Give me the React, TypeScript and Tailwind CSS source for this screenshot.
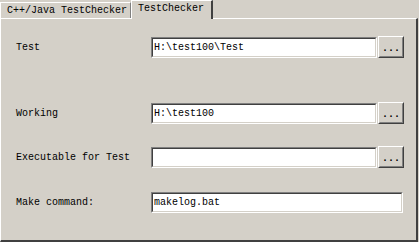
const font = { fontFamily: '"Liberation Mono", "DejaVu Sans Mono", monospace' };

function TextBox({ value, wide }: { value: string; wide?: boolean }) {
  return (
    <div
      className={`${wide ? 'w-[252px]' : 'w-[226px]'} h-[21px] border border-t-[#808080] border-l-[#808080] border-b-white border-r-white`}
    >
      <div className="h-full border border-t-[#404040] border-l-[#404040] border-b-[#d4d0c8] border-r-[#d4d0c8] bg-white flex items-center pl-[1px] text-[10px] text-black leading-none">
        {value}
      </div>
    </div>
  );
}

function Browse() {
  return (
    <div className="w-[26px] h-[22px] border border-t-white border-l-white border-b-[#404040] border-r-[#404040] -mt-[1px]">
      <div className="h-full border border-t-[#d4d0c8] border-l-[#d4d0c8] border-b-[#808080] border-r-[#808080] flex items-center justify-center text-[10px] font-bold text-black leading-none pt-[3px]">
        ...
      </div>
    </div>
  );
}

function Row({ label, value, browse = true, wide }: { label: string; value: string; browse?: boolean; wide?: boolean }) {
  return (
    <div className="flex items-center">
      <div className="w-[150px] pl-[15px] text-[10px] text-black leading-none">{label}</div>
      <TextBox value={value} wide={wide} />
      {browse && <div className="ml-[1px]"><Browse /></div>}
    </div>
  );
}

export default function App() {
  return (
    <div className="w-[419px] h-[242px] bg-[#d4d0c8] overflow-hidden" style={font}>
      <div className="flex items-end h-[18px]">
        <div className="h-[16px] w-[131px] border-t border-l border-white border-r border-r-[#808080] flex items-center pl-[6px] text-[10px] text-black leading-none">
          C++/Java TestChecker
        </div>
        <div className="relative z-10 h-[19px] -mb-[1px] w-[82px] bg-[#d4d0c8] border-t border-l border-white border-r-2 border-r-[#404040] flex items-start pt-[3px] pl-[6px] text-[10px] text-black leading-none">
          TestChecker
        </div>
      </div>
      <div className="w-[418px] h-[224px] border-t border-l border-white border-r-2 border-r-[#404040] border-b-2 border-b-[#404040] flex flex-col">
        <div className="mt-[18px]">
          <Row label="Test" value="H:\test100\Test" />
        </div>
        <div className="mt-[45px]">
          <Row label="Working" value="H:\test100" />
        </div>
        <div className="mt-[23px]">
          <Row label="Executable for Test" value="" />
        </div>
        <div className="mt-[24px]">
          <Row label="Make command:" value="makelog.bat" browse={false} wide />
        </div>
      </div>
    </div>
  );
}
